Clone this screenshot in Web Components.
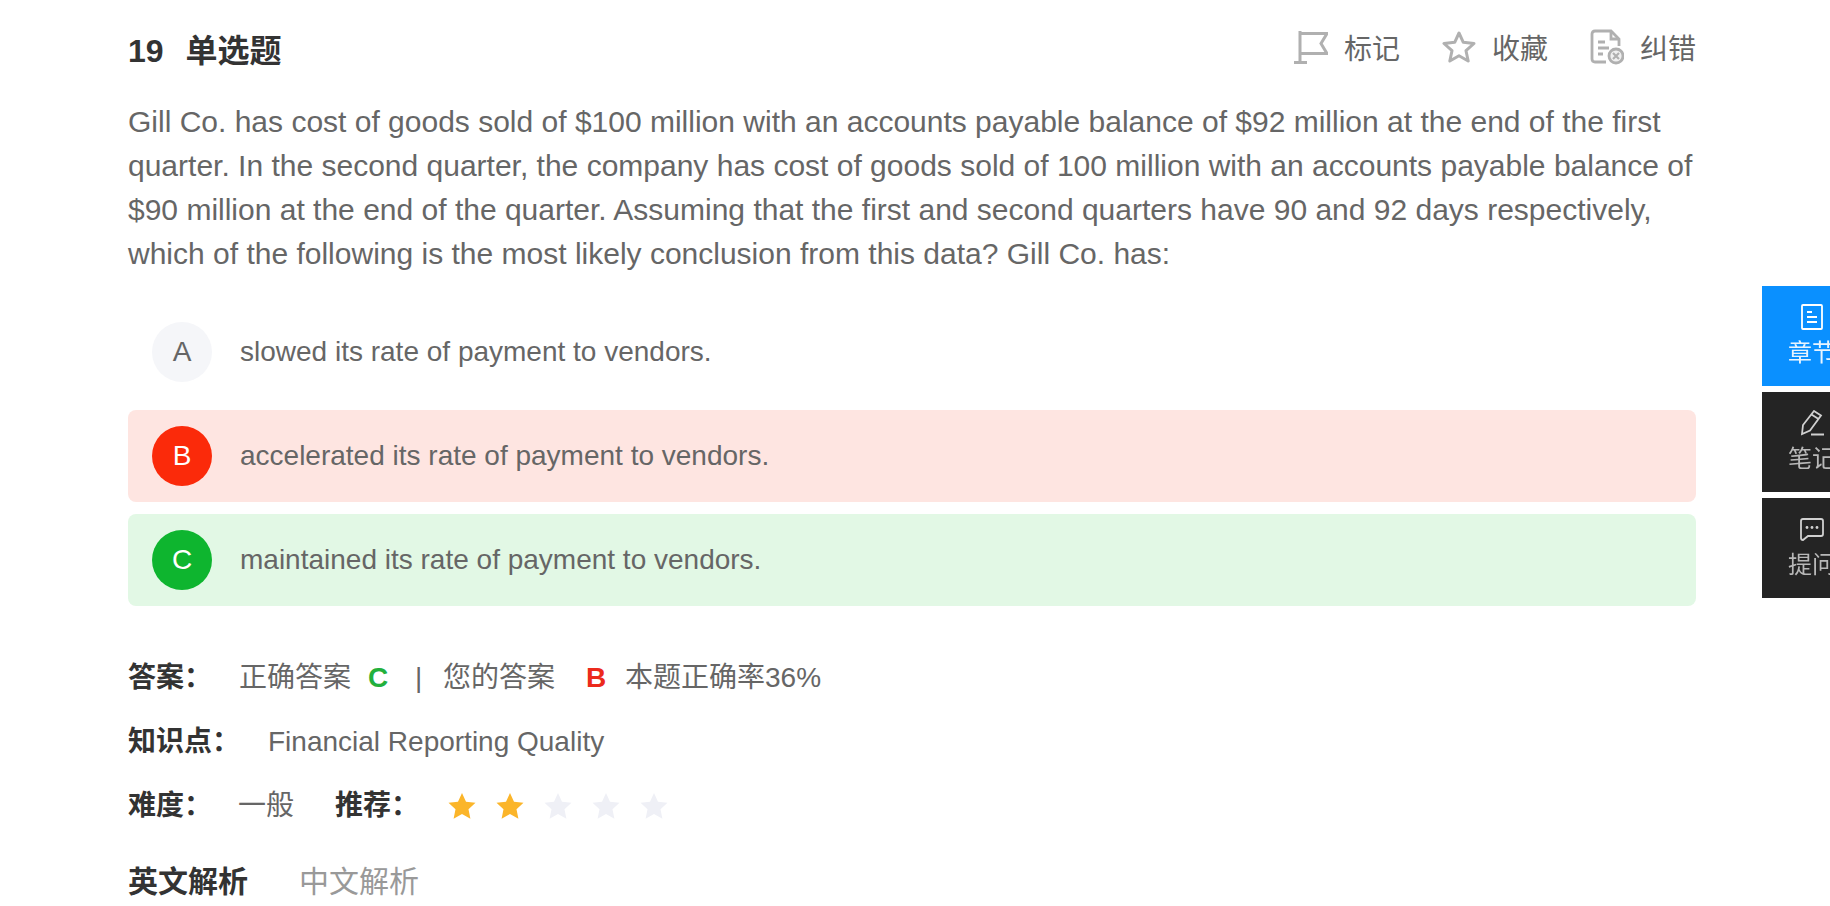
<!DOCTYPE html>
<html lang="zh">
<head>
<meta charset="utf-8">
<title>单选题</title>
<style>
html, body { margin: 0; height: 906px; overflow: hidden; background: #fff; }
body { font-family: "Liberation Sans", "Noto Sans CJK SC", sans-serif; color: #666; font-size: 28px; }
</style>
</head>
<body>
<question-page>
    <question-header number="19" kind="单选题">
        <action-item label="标记">
            <svg width="34" height="36" viewBox="0 0 34 36" fill="none" stroke="#b0b0b0" stroke-width="3"><path d="M6 2v31M0 33.500h13M6 4.500h27l-6 10 6 10H6"/></svg>
        </action-item>
        <action-item label="收藏">
            <svg width="34" height="36" viewBox="0 0 34 36" fill="none" stroke="#b0b0b0" stroke-width="3" stroke-linejoin="round"><path d="M17 4l4.300 9.300 10.700 1.200-8 7.200 2.200 10.300L17 26.800 7.800 32 10 21.700l-8-7.200 10.700-1.200z"/></svg>
        </action-item>
        <action-item label="纠错">
            <svg width="34" height="36" viewBox="0 0 34 36" fill="none" stroke="#b0b0b0" stroke-width="2.800"><path d="M16 33H5q-3 0-3-3V5q0-3 3-3h16l8 8v7"/><path d="M21 2v8h8M8 13h7M8 19h11M8 25h5"/><circle cx="26" cy="27" r="7" fill="#f0f0f0"/><path stroke-width="2.200" d="M23 24l6 6M29 24l-6 6"/></svg>
        </action-item>
    </question-header>
    <question-stem>Gill Co. has cost of goods sold of $100 million with an accounts payable balance of $92 million at the end of the first quarter. In the second quarter, the company has cost of goods sold of 100 million with an accounts payable balance of $90 million at the end of the quarter. Assuming that the first and second quarters have 90 and 92 days respectively, which of the following is the most likely conclusion from this data? Gill Co. has:</question-stem>
    <option-list>
        <answer-option letter="A">slowed its rate of payment to vendors.</answer-option>
        <answer-option letter="B" state="wrong">accelerated its rate of payment to vendors.</answer-option>
        <answer-option letter="C" state="right">maintained its rate of payment to vendors.</answer-option>
    </option-list>
    <info-block>
        <info-row label="答案：" width="111">
            <span style="width:129px">正确答案</span><span style="width:47px;color:#22b03c;font-weight:700">C</span><span style="width:28px;font-weight:300">|</span><span style="width:143px">您的答案</span><span style="width:39px;color:#ec2a1c;font-weight:700">B</span><span>本题正确率36%</span>
        </info-row>
        <info-row label="知识点：" width="140">Financial Reporting Quality</info-row>
        <info-row label="难度：" width="110">
            <span style="width:97px">一般</span><strong style="width:113px;color:#333">推荐：</strong><star-rating value="2"></star-rating>
        </info-row>
    </info-block>
    <analysis-tabs>
        <span slot="active">英文解析</span>
        <span>中文解析</span>
    </analysis-tabs>
</question-page>

<side-dock>
    <side-tab label="章节" active>
        <svg width="26" height="26" viewBox="0 0 26 26" fill="none" stroke="#fff" stroke-width="1.800"><rect x="3" y="1" width="20" height="24" rx="1"/><path d="M8 8h5M8 13h10M8 18h10"/></svg>
    </side-tab>
    <side-tab label="笔记">
        <svg width="26" height="26" viewBox="0 0 26 26" fill="none" stroke="#d0d0d0" stroke-width="1.800"><path d="M15 1l7 4.500-11 15-8 3.500 1-9zM12.500 4.500l7 4.500M12 24.500h13"/></svg>
    </side-tab>
    <side-tab label="提问">
        <svg width="26" height="26" viewBox="0 0 26 26" fill="none" stroke="#d0d0d0" stroke-width="1.800"><path d="M4 3h18q2 0 2 2v13q0 2-2 2H9l-5 4q-2 0-2-2V5q0-2 2-2z"/><g fill="#d0d0d0" stroke="none"><circle cx="8" cy="11.500" r="1.400"/><circle cx="13" cy="11.500" r="1.400"/><circle cx="18" cy="11.500" r="1.400"/></g></svg>
    </side-tab>
</side-dock>

<script>
class QuestionPage extends HTMLElement {
    constructor() {
        super();
        this.attachShadow({ mode: "open" });
        this.shadowRoot.innerHTML = `
            <style>
                :host { display: block; padding: 0 134px 0 128px; }
            </style>
            <slot></slot>
        `;
    }
}

class QuestionHeader extends HTMLElement {
    constructor() {
        super();
        this.attachShadow({ mode: "open" });
        this.shadowRoot.innerHTML = `
            <style>
                :host { display: flex; justify-content: space-between; align-items: center; height: 100px; }
                .title { display: flex; align-items: baseline; gap: 22px; margin-top: -4px; font-size: 32px; font-weight: 700; color: #333; }
                .actions { display: flex; gap: 42px; margin-top: -6px; }
            </style>
            <div class="title"><span>${this.getAttribute("number")}</span><span>${this.getAttribute("kind")}</span></div>
            <div class="actions"><slot></slot></div>
        `;
    }
}

class ActionItem extends HTMLElement {
    constructor() {
        super();
        this.attachShadow({ mode: "open" });
        this.shadowRoot.innerHTML = `
            <style>
                :host { display: flex; align-items: center; gap: 16px; font-size: 28px; color: #666; }
                ::slotted(svg) { display: block; }
            </style>
            <slot></slot><span>${this.getAttribute("label")}</span>
        `;
    }
}

class QuestionStem extends HTMLElement {
    constructor() {
        super();
        this.attachShadow({ mode: "open" });
        this.shadowRoot.innerHTML = `
            <style>
                :host { display: block; font-size: 30px; line-height: 44px; color: #666; }
            </style>
            <slot></slot>
        `;
    }
}

class OptionList extends HTMLElement {
    constructor() {
        super();
        this.attachShadow({ mode: "open" });
        this.shadowRoot.innerHTML = `
            <style>
                :host { display: flex; flex-direction: column; gap: 12px; margin-top: 30px; }
            </style>
            <slot></slot>
        `;
    }
}

class AnswerOption extends HTMLElement {
    constructor() {
        super();
        this.attachShadow({ mode: "open" });
        this.shadowRoot.innerHTML = `
            <style>
                :host { display: flex; align-items: center; gap: 28px; height: 92px; padding: 0 24px; border-radius: 8px; font-size: 28px; color: #666; }
                .dot { display: flex; align-items: center; justify-content: center; width: 60px; height: 60px; border-radius: 50%; background: #f5f6f9; }
                :host([state="wrong"]) { background: #fee5e1; }
                :host([state="wrong"]) .dot { background: #fb2a0a; color: #fff; }
                :host([state="right"]) { background: #e2f8e5; }
                :host([state="right"]) .dot { background: #0eb52f; color: #fff; }
            </style>
            <div class="dot">${this.getAttribute("letter")}</div>
            <div><slot></slot></div>
        `;
    }
}

class InfoBlock extends HTMLElement {
    constructor() {
        super();
        this.attachShadow({ mode: "open" });
        this.shadowRoot.innerHTML = `
            <style>
                :host { display: block; margin-top: 40px; }
            </style>
            <slot></slot>
        `;
    }
}

class InfoRow extends HTMLElement {
    constructor() {
        super();
        this.attachShadow({ mode: "open" });
        this.shadowRoot.innerHTML = `
            <style>
                :host { display: flex; align-items: baseline; height: 64px; line-height: 64px; font-size: 28px; color: #666; }
                b { flex: none; color: #333; }
                ::slotted(span), ::slotted(strong) { display: block; flex: none; }
                ::slotted(star-rating) { align-self: center; }
            </style>
            <b style="width:${this.getAttribute("width")}px">${this.getAttribute("label")}</b>
            <slot></slot>
        `;
    }
}

class StarRating extends HTMLElement {
    constructor() {
        super();
        this.attachShadow({ mode: "open" });
        const value = Number(this.getAttribute("value"));
        let stars = "";
        for (let i = 0; i < 5; i++) {
            stars += `<svg width="28" height="28" viewBox="0 0 28 28"><path fill="${i < value ? "#fbb52a" : "#eff0f6"}" d="M14 1l4 8.700 9.500 1.100-7 6.500 1.900 9.400L14 22l-8.400 4.700 1.900-9.400-7-6.500L10 9.700z"/></svg>`;
        }
        this.shadowRoot.innerHTML = `
            <style>
                :host { display: flex; gap: 20px; }
            </style>
            ${stars}
        `;
    }
}

class AnalysisTabs extends HTMLElement {
    constructor() {
        super();
        this.attachShadow({ mode: "open" });
        this.shadowRoot.innerHTML = `
            <style>
                :host { display: flex; gap: 51px; align-items: center; height: 64px; margin-top: 9px; font-size: 30px; color: #999; }
                .active { font-weight: 700; color: #333; }
            </style>
            <div class="active"><slot name="active"></slot></div>
            <slot></slot>
        `;
    }
}

class SideDock extends HTMLElement {
    constructor() {
        super();
        this.attachShadow({ mode: "open" });
        this.shadowRoot.innerHTML = `
            <style>
                :host { position: fixed; left: 1762px; top: 286px; width: 100px; display: flex; flex-direction: column; gap: 6px; }
            </style>
            <slot></slot>
        `;
    }
}

class SideTab extends HTMLElement {
    constructor() {
        super();
        this.attachShadow({ mode: "open" });
        this.shadowRoot.innerHTML = `
            <style>
                :host { display: flex; flex-direction: column; align-items: center; gap: 7px; height: 100px; padding-top: 18px; box-sizing: border-box; background: #242424; color: #b8b8b8; font-size: 24px; line-height: 32px; }
                :host([active]) { background: #0a90ff; color: #e8f4ff; }
                ::slotted(svg) { display: block; }
            </style>
            <slot></slot><span>${this.getAttribute("label")}</span>
        `;
    }
}

customElements.define("question-page", QuestionPage);
customElements.define("question-header", QuestionHeader);
customElements.define("action-item", ActionItem);
customElements.define("question-stem", QuestionStem);
customElements.define("option-list", OptionList);
customElements.define("answer-option", AnswerOption);
customElements.define("info-block", InfoBlock);
customElements.define("info-row", InfoRow);
customElements.define("star-rating", StarRating);
customElements.define("analysis-tabs", AnalysisTabs);
customElements.define("side-dock", SideDock);
customElements.define("side-tab", SideTab);
</script>
</body>
</html>
